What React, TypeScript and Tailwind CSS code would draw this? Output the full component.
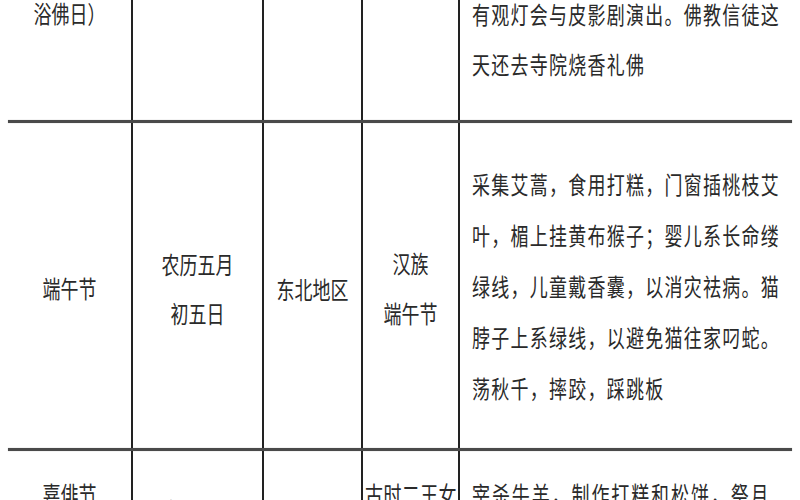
import React from 'react';

const font = "font-['Noto_Sans_CJK_SC','Noto_Sans',sans-serif]";

function Line({ text, h = 'h-[50px] leading-[50px]', track = 'tracking-normal' }: { text: string; h?: string; track?: string }) {
  return (
    <div className={`${h} whitespace-nowrap`}>
      <span className={`inline-block scale-y-[1.35] ${track}`}>{text}</span>
    </div>
  );
}

const cols = 'grid grid-cols-[123px_131px_99px_97px_335px]';
const cell = 'border-l-2 border-[#222]';

function Rule() {
  return <div className="mx-[8px] h-[3px] bg-[#4a4a4a] shadow-[0_0_1px_#8a8a8a]" />;
}

export default function App() {
  return (
    <div className={`w-[800px] h-[500px] overflow-hidden bg-white text-[18px] text-[#2a2a2a] ${font}`}>
      <div className="pl-[8px]">
        {/* 上一行（浴佛节）的尾部 */}
        <div className={`${cols} h-[120px] overflow-hidden`}>
          <div className="flex justify-center -mt-[13px]">
            <Line text="浴佛日）" />
          </div>
          <div className={cell} />
          <div className={cell} />
          <div className={cell} />
          <div className={`${cell} pl-[12px] -mt-[0px]`}>
            <div className="-mt-[12px]">
              <Line text="有观灯会与皮影剧演出。佛教信徒这" track="tracking-[1.25px]" />
              <Line text="天还去寺院烧香礼佛" track="tracking-[1.25px]" />
            </div>
          </div>
        </div>
      </div>

      <Rule />

      <div className="pl-[8px]">
        {/* 端午节 */}
        <div className={`${cols} h-[325px]`}>
          <div className="flex items-center justify-center pt-[3px]">
            <Line text="端午节" />
          </div>
          <div className={`${cell} flex flex-col items-center justify-center pt-[4px]`}>
            <Line text="农历五月" h="h-[49px] leading-[49px]" />
            <Line text="初五日" h="h-[49px] leading-[49px]" />
          </div>
          <div className={`${cell} flex items-center justify-center pt-[4px]`}>
            <Line text="东北地区" />
          </div>
          <div className={`${cell} flex flex-col items-center justify-center pt-[3px]`}>
            <Line text="汉族" />
            <Line text="端午节" />
          </div>
          <div className={`${cell} flex flex-col justify-center pl-[12px]`}>
            {[
              '采集艾蒿，食用打糕，门窗插桃枝艾',
              '叶，楣上挂黄布猴子；婴儿系长命缕',
              '绿线，儿童戴香囊，以消灾祛病。猫',
              '脖子上系绿线，以避免猫往家叼蛇。',
              '荡秋千，摔跤，踩跳板',
            ].map((t) => (
              <Line key={t} text={t} h="h-[51px] leading-[51px]" track="tracking-[1.25px]" />
            ))}
          </div>
        </div>
      </div>

      <Rule />

      <div className="pl-[8px]">
        {/* 嘉俳节 */}
        <div className={`${cols} h-[60px]`}>
          <div className="flex justify-center pt-[17px]">
            <Line text="嘉俳节" />
          </div>
          <div className={`${cell} flex justify-center pt-[33px] text-[#777]`}>
            <Line text="农历八月" />
          </div>
          <div className={cell} />
          <div className={`${cell} pl-[2px] pt-[17px]`}>
            <Line text="古时二王女" track="tracking-[0.4px]" />
          </div>
          <div className={`${cell} pl-[12px] pt-[17px]`}>
            <Line text="宰杀牛羊，制作打糕和松饼，祭月" track="tracking-[1.9px]" />
          </div>
        </div>
      </div>
    </div>
  );
}
